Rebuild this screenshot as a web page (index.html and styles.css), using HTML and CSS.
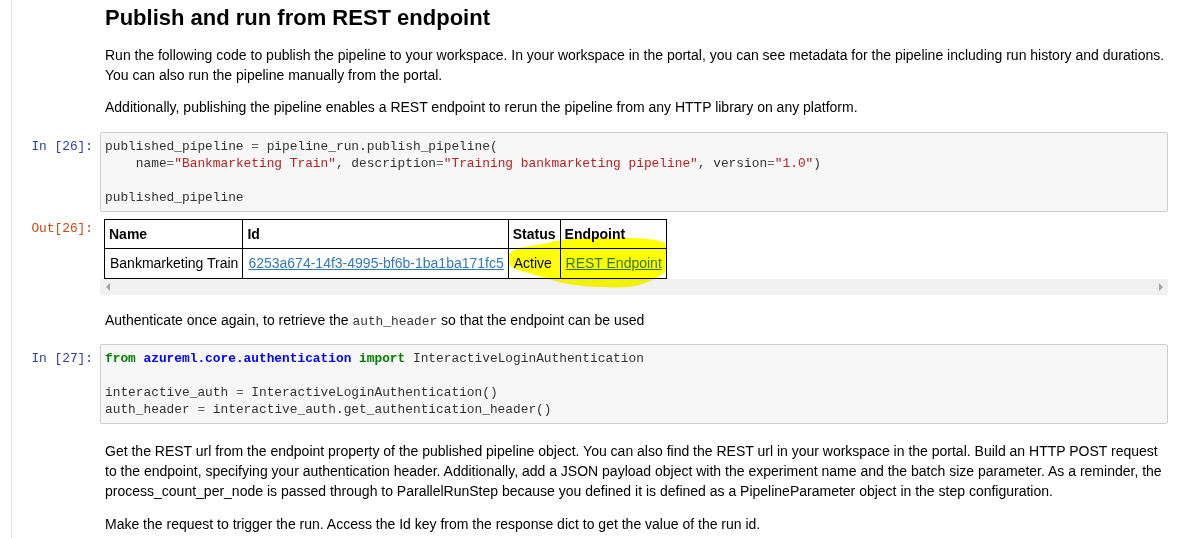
FILE: index.html
```html
<!DOCTYPE html>
<html lang="en">
<head>
<meta charset="utf-8">
<title>Publish and run from REST endpoint</title>
<link rel="stylesheet" href="styles.css">
</head>
<body>
<div class="notebook">

  <section class="cell">
    <div class="prompt"></div>
    <div class="md">
      <h2 class="title">Publish and run from REST endpoint</h2>
      <p class="text first">Run the following code to publish the pipeline to your workspace. In your workspace in the portal, you can see metadata for the pipeline including run history and durations. You can also run the pipeline manually from the portal.</p>
      <p class="text second">Additionally, publishing the pipeline enables a REST endpoint to rerun the pipeline from any HTTP library on any platform.</p>
    </div>
  </section>

  <section class="code-cell cell-26">
    <div class="cell">
      <div class="prompt in">In&nbsp;[26]:</div>
      <div class="input"><pre class="code">published_pipeline <span class="op">=</span> pipeline_run.publish_pipeline(
    name<span class="op">=</span><span class="str">"Bankmarketing Train"</span>, description<span class="op">=</span><span class="str">"Training bankmarketing pipeline"</span>, version<span class="op">=</span><span class="str">"1.0"</span>)

published_pipeline</pre></div>
    </div>
    <div class="cell out-row">
      <div class="prompt out">Out[26]:</div>
      <div class="output">
        <div class="table-wrap">
          <table class="result">
            <thead>
              <tr><th>Name</th><th>Id</th><th>Status</th><th>Endpoint</th></tr>
            </thead>
            <tbody>
              <tr>
                <td>Bankmarketing Train</td>
                <td><a class="link" href="#">6253a674-14f3-4995-bf6b-1ba1ba171fc5</a></td>
                <td>Active</td>
                <td><a class="link" href="#">REST Endpoint</a></td>
              </tr>
            </tbody>
          </table>
          <svg class="marker" width="600" height="90" viewBox="0 0 600 90" aria-hidden="true">
            <path d="M405 38 C406 32 411 30 420 28 C431 26 441 25 451 22 C471 18 501 18 522 19 C538 19 551 20 559 23 C563 25 563 30 563 38 C563 45 563 50 560 54 C555 58 548 62 538 65 C526 69 513 69 501 68 C488 68 476 67 464 65 C453 63 442 59 431 56 C421 53 412 51 408 48 C404 45 403 42 405 38 Z" fill="#ffff00"/>
          </svg>
        </div>
        <div class="hscroll"><span class="arrow left"></span><span class="arrow right"></span></div>
      </div>
    </div>
  </section>

  <section class="cell">
    <div class="prompt"></div>
    <div class="md">
      <p class="text auth">Authenticate once again, to retrieve the <code class="inline">auth_header</code> so that the endpoint can be used</p>
    </div>
  </section>

  <section class="code-cell cell-27">
    <div class="cell">
      <div class="prompt in">In&nbsp;[27]:</div>
      <div class="input"><pre class="code"><span class="kw">from</span> <span class="ns">azureml.core.authentication</span> <span class="kw">import</span> InteractiveLoginAuthentication

interactive_auth <span class="op">=</span> InteractiveLoginAuthentication()
auth_header <span class="op">=</span> interactive_auth.get_authentication_header()</pre></div>
    </div>
  </section>

  <section class="cell">
    <div class="prompt"></div>
    <div class="md">
      <p class="text rest">Get the REST url from the endpoint property of the published pipeline object. You can also find the REST url in your workspace in the portal. Build an HTTP POST request to the endpoint, specifying your authentication header. Additionally, add a JSON payload object with the experiment name and the batch size parameter. As a reminder, the process_count_per_node is passed through to ParallelRunStep because you defined it is defined as a PipelineParameter object in the step configuration.</p>
      <p class="text last">Make the request to trigger the run. Access the Id key from the response dict to get the value of the run id.</p>
    </div>
  </section>

</div>
</body>
</html>
```
FILE: styles.css
```css
* {
  box-sizing: border-box;
}

html,
body {
  margin: 0;
  padding: 0;
  background: #ffffff;
}

body {
  font-family: "Liberation Sans", Arial, sans-serif;
  font-size: 14px;
  line-height: 20px;
  color: #000000;
  overflow: hidden;
}

.notebook {
  margin-left: 11px;
  border-left: 1px solid #e4e4e4;
  min-height: 538px;
  width: 1181px;
  padding-right: 24px;
}

.cell {
  display: flex;
  align-items: flex-start;
}

.prompt {
  flex: none;
  width: 88px;
  padding-right: 7px;
  text-align: right;
  font-family: "Liberation Mono", "Courier New", monospace;
  font-size: 12.83px;
  line-height: 17px;
  white-space: nowrap;
}

.prompt.in {
  color: #303f9f;
  padding-top: 6px;
}

.prompt.out {
  color: #d84315;
  padding-top: 1px;
}

.md {
  flex: 1;
  min-width: 0;
  padding-left: 5px;
}

.title {
  margin: 5px 0 14px;
  font-size: 22px;
  line-height: 26px;
  font-weight: bold;
}

.text {
  margin: 0;
}

.text.first {
  margin-bottom: 12px;
}

.code-cell.cell-26 {
  margin-top: 15px;
}

.input {
  flex: 1;
  min-width: 0;
  background: #f7f7f7;
  border: 1px solid #cfcfcf;
  border-radius: 2px;
}

.code {
  margin: 0;
  padding: 5px 4px;
  font-family: "Liberation Mono", "Courier New", monospace;
  font-size: 12.83px;
  line-height: 17px;
  color: #333333;
  white-space: pre;
}

.op {
  color: #666666;
}

.str {
  color: #ba2121;
}

.kw {
  color: #008000;
  font-weight: bold;
}

.ns {
  color: #0000ff;
  font-weight: bold;
}

.out-row {
  margin-top: 7px;
}

.output {
  flex: 1;
  min-width: 0;
}

.table-wrap {
  position: relative;
  padding-left: 4px;
}

.result {
  border-collapse: collapse;
  font-size: 14px;
  line-height: 20px;
}

.result th,
.result td {
  border: 1px solid #000000;
  text-align: left;
  white-space: nowrap;
}

.result th {
  padding: 4px 4px 4px 4px;
  font-weight: bold;
}

.result td {
  padding: 4px 4px 5px 5px;
}

.link {
  color: #337ab7;
  text-decoration: underline;
}

.marker {
  position: absolute;
  left: 4px;
  top: 0;
  overflow: visible;
  pointer-events: none;
  mix-blend-mode: multiply;
}

.hscroll {
  display: flex;
  justify-content: space-between;
  align-items: center;
  height: 16px;
  padding: 0 5px 0 5px;
  background: #f1f1f1;
}

.arrow {
  width: 0;
  height: 0;
  border-top: 4px solid transparent;
  border-bottom: 4px solid transparent;
}

.arrow.left {
  border-right: 4px solid #a3a3a3;
  margin-left: 1px;
}

.arrow.right {
  border-left: 4px solid #a3a3a3;
}

.text.auth {
  margin-top: 15px;
}

.inline {
  font-family: "Liberation Mono", "Courier New", monospace;
  font-size: 12.83px;
  color: #333333;
}

.code-cell.cell-27 {
  margin-top: 12px;
}

.text.rest {
  margin-top: 17px;
  margin-bottom: 13px;
}
```
